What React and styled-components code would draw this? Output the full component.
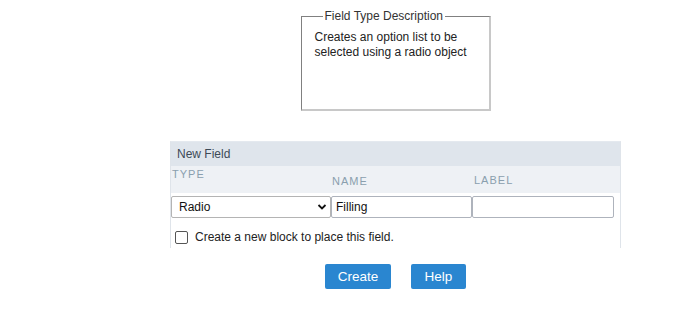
import React from "react";
import styled, { createGlobalStyle } from "styled-components";

const Global = createGlobalStyle`
  body {
    margin: 0;
    background: #fff;
    font-family: "Liberation Sans", Arial, sans-serif;
  }
`;

const Page = styled.div`
  width: 687px;
  height: 328px;
  padding-left: 104px;
  box-sizing: border-box;
  display: flex;
  flex-direction: column;
  align-items: center;
`;

const Description = styled.fieldset`
  margin: 9px 0 0;
  width: 190px;
  height: 102px;
  box-sizing: border-box;
  border-color: #808080 #c8c8c8 #c8c8c8 #808080;
  border-style: solid;
  border-width: 1px 2px 2px 1px;
  padding: 6px 12px 3px 13px;
  font-size: 12px;
  color: #222;
  line-height: 15px;
  legend {
    padding: 0 2px;
    margin-left: 8px;
    color: #333;
  }
`;

const Panel = styled.div`
  margin-top: 30px;
  width: 451px;
  box-sizing: border-box;
  border-left: 1px solid #dfe4ea;
  border-right: 1px solid #dfe4ea;
  border-top: 1px solid #e4e9ef;
`;

const Header = styled.div`
  height: 24px;
  background: #dfe5ec;
  font-size: 12px;
  color: #3d4a57;
  padding-left: 6px;
  display: flex;
  align-items: center;
`;

const Labels = styled.div`
  height: 27px;
  background: #eef1f5;
  display: grid;
  grid-template-columns: 160px 141px 142px;
  font-size: 11px;
  letter-spacing: 1px;
  color: #8a9fae;
`;

const Label = styled.span`
  padding-left: ${(p) => p.$pad || 0}px;
  padding-top: ${(p) => p.$top}px;
`;

const Inputs = styled.div`
  display: grid;
  grid-template-columns: 160px 141px 142px;
  margin-top: 3px;
`;

const Select = styled.div`
  height: 22px;
  box-sizing: border-box;
  border: 1px solid #b4b4b4;
  border-radius: 2px;
  display: flex;
  align-items: center;
  justify-content: space-between;
  padding: 0 3px 0 7px;
  font-size: 12px;
  color: #111;
`;

const Input = styled.div`
  height: 22px;
  box-sizing: border-box;
  border: 1px solid #aeb3bc;
  border-radius: 2px;
  display: flex;
  align-items: center;
  padding: 0 4px;
  font-size: 12px;
  color: #111;
`;

const CheckRow = styled.label`
  display: flex;
  align-items: center;
  gap: 7px;
  padding: 12px 0 4px 4px;
  font-size: 12px;
  color: #222;
`;

const Box = styled.span`
  width: 11px;
  height: 11px;
  border: 1px solid #555;
  border-radius: 2px;
`;

const Buttons = styled.div`
  margin-top: 16px;
  display: flex;
  gap: 20px;
`;

const Button = styled.button`
  height: 25px;
  width: ${(p) => p.$w}px;
  border: none;
  border-radius: 2px;
  background: #2a86d0;
  color: #fff;
  font-family: "Liberation Sans", Arial, sans-serif;
  font-size: 13.5px;
  padding: 0;
`;

export default function App() {
  return (
    <Page>
      <Global />
      <Description>
        <legend>Field Type Description</legend>
        Creates an option list to be selected using a radio object
      </Description>
      <Panel>
        <Header>New Field</Header>
        <Labels>
          <Label $pad={1} $top={2}>TYPE</Label>
          <Label $pad={1} $top={9}>NAME</Label>
          <Label $pad={2} $top={8}>LABEL</Label>
        </Labels>
        <Inputs>
          <Select>
            Radio
            <svg width="10" height="8" viewBox="0 0 10 8">
              <path d="M1.5 2 L5 5.5 L8.5 2" fill="none" stroke="#111" strokeWidth="1.8" />
            </svg>
          </Select>
          <Input>Filling</Input>
          <Input />
        </Inputs>
        <CheckRow>
          <Box />
          Create a new block to place this field.
        </CheckRow>
      </Panel>
      <Buttons>
        <Button $w={66}>Create</Button>
        <Button $w={55}>Help</Button>
      </Buttons>
    </Page>
  );
}
